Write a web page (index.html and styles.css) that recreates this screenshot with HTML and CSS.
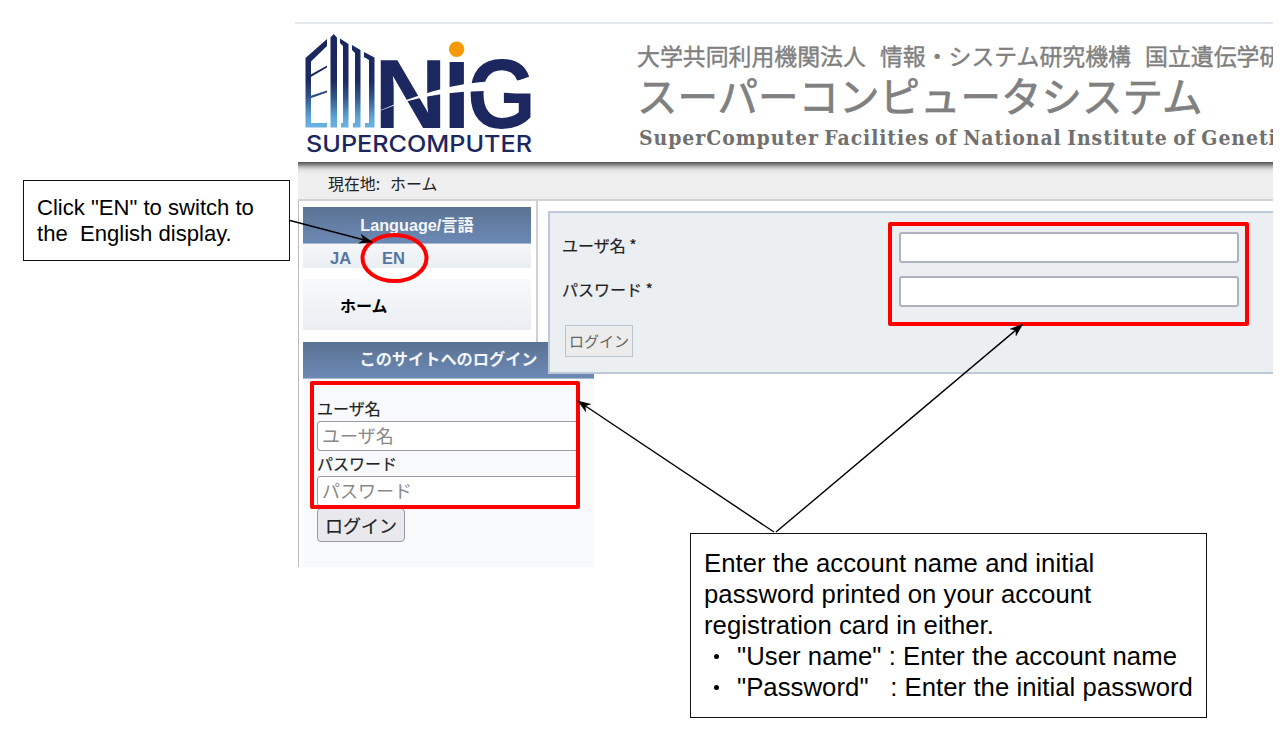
FILE: index.html
```
<!DOCTYPE html>
<html lang="ja">
<head>
<meta charset="utf-8">
<title>NIG SuperComputer</title>
<link rel="stylesheet" href="styles.css">
</head>
<body>
<main class="canvas">
  <div class="site">
    <header class="banner">
      <svg class="logo" width="240" height="126" viewBox="300 30 240 126">
        <defs>
          <linearGradient id="tower" gradientUnits="userSpaceOnUse" x1="0" y1="34" x2="0" y2="127">
            <stop offset="0" stop-color="#1b2760"/>
            <stop offset=".5" stop-color="#1b2a60"/>
            <stop offset=".68" stop-color="#31568a"/>
            <stop offset=".9" stop-color="#5fa5d8"/>
            <stop offset="1" stop-color="#6bb2e3"/>
          </linearGradient>
        </defs>
        <g fill="url(#tower)">
          <path d="M305.500 58 L327 39 V46 L311 61.500 V123 H327 V127.500 H305.500Z"/>
          <path d="M330.500 37.500 L333.700 34 L337 37.500 V127.500 H330.500Z"/>
          <path d="M340 38.500 L348.500 44 V127.500 H341 V123 H343 V46 L340 43Z"/>
          <path d="M352 45 L360.500 50 V127.500 H353 V123 H355 V53 L352 50Z"/>
          <path d="M364 52 L374.500 57.500 V127.500 H365 V123 H369 V60 L364 57Z"/>
          <path d="M310 75 L327 65.500 V67.500 L310 77.500Z M310 96 L327 90.500 V92.500 L310 98.500Z"/>
        </g>
        <g class="logo-name">
          <text x="374" y="127.500" textLength="73" lengthAdjust="spacingAndGlyphs">N</text>
          <text x="443" y="127.500">I</text>
          <text x="467" y="127.500" textLength="69" lengthAdjust="spacingAndGlyphs">G</text>
        </g>
        <path d="M447 56 H468 V62 H447Z" fill="#fff"/>
        <circle cx="456.600" cy="49.300" r="7.700" fill="#f59a05"/>
        <path d="M381 110 Q418 94 452 86.500 T533 81 V93.500 H516 L484 91 Q445 91 408 101 Q394 105 381 110.500Z" fill="#fff"/>
        <text class="logo-sub" x="306" y="152" textLength="226" lengthAdjust="spacingAndGlyphs">SUPERCOMPUTER</text>
      </svg>
      <div class="titles">
        <div class="org"><span>大学共同利用機関法人</span><span>情報・システム研究機構</span><span>国立遺伝学研究所</span></div>
        <h1 class="system">スーパーコンピュータシステム</h1>
        <div class="facility">SuperComputer Facilities of National Institute of Genetics</div>
      </div>
    </header>
    <nav class="crumbs"><span>現在地:</span><span>ホーム</span></nav>
    <div class="columns">
      <aside class="side">
        <div class="rail">
          <section class="lang">
            <h2 class="bar">Language/言語</h2>
            <div class="langs"><a>JA</a><a>EN</a></div>
          </section>
          <div class="home">ホーム</div>
        </div>
        <section class="signin">
          <h2 class="bar">このサイトへのログイン</h2>
          <div class="fields">
            <label>ユーザ名</label>
            <div class="field">ユーザ名</div>
            <label>パスワード</label>
            <div class="field">パスワード</div>
            <div class="send">ログイン</div>
          </div>
        </section>
      </aside>
      <section class="panel">
        <div class="row"><label>ユーザ名 *</label><div class="entry"></div></div>
        <div class="row"><label>パスワード *</label><div class="entry"></div></div>
        <div class="go">ログイン</div>
      </section>
    </div>
  </div>

  <svg class="marks" width="1282" height="729" viewBox="0 0 1282 729">
    <defs>
      <marker id="tip" viewBox="0 0 14 10" refX="13" refY="5" markerWidth="14" markerHeight="10" markerUnits="userSpaceOnUse" orient="auto">
        <path d="M14 5 L0 0 L4 5 L0 10Z"/>
      </marker>
    </defs>
    <g fill="none" stroke="#f00" stroke-width="4" stroke-linejoin="round">
      <ellipse cx="394.500" cy="258" rx="32" ry="23"/>
      <rect x="312" y="383" width="266" height="124"/>
      <rect x="890" y="224" width="357" height="100"/>
    </g>
    <g stroke="#000" stroke-width="1.400">
      <path d="M290 220.500 L372 242" marker-end="url(#tip)"/>
      <path d="M774 532 L578 401" marker-end="url(#tip)"/>
      <path d="M776 532 L1022.500 324.500" marker-end="url(#tip)"/>
    </g>
  </svg>

  <div class="note note-lang">Click "EN" to switch to<br>the&nbsp; English display.</div>
  <div class="note note-account">
    <p>Enter the account name and initial<br>password printed on your account<br>registration card in either.</p>
    <p class="item"><i></i><span>"User name" : Enter the account name</span></p>
    <p class="item"><i></i><span>"Password" &nbsp; : Enter the initial password</span></p>
  </div>
</main>
</body>
</html>
```
FILE: styles.css
```
* { box-sizing: border-box; }
body { margin: 0; background: #fff; }
h1, h2, p { margin: 0; font-weight: normal; }
.canvas {
  position: relative;
  width: 1282px;
  height: 729px;
  padding: 22px 0 0 295px;
  overflow: hidden;
  font-family: "Liberation Sans", "Noto Sans CJK JP", sans-serif;
}
.site { width: 978px; height: 545px; overflow: hidden; font-size: 16px; color: #222; }
.banner {
  display: flex;
  height: 140px;
  padding: 6px 0 0 5px;
  border-top: 2px solid #e3e8ee;
}
.logo { flex: none; }
.logo-name { font: bold 99px "Liberation Sans", sans-serif; fill: #1c2760; }
.logo-sub { font: 500 22.500px Inter, sans-serif; fill: #1c2760; }
.titles { flex: none; margin-left: 97px; white-space: nowrap; color: #808080; }
.org { display: flex; gap: 14px; margin-top: 8px; height: 34px; font: 22.900px/34px "Noto Sans CJK JP", sans-serif; -webkit-text-stroke: .4px #808080; }
.system { height: 46px; font: 40.500px/46px "Noto Sans CJK JP", sans-serif; -webkit-text-stroke: .7px #808080; }
.facility {
  margin: 7px 0 0 2px;
  font: bold 21px/26px "DejaVu Serif Condensed", "DejaVu Serif", serif;
  letter-spacing: .920px;
  word-spacing: -2px;
  color: #707070;
}
.crumbs {
  display: flex;
  gap: 10px;
  height: 39px;
  margin-left: 3px;
  padding: 7px 0 0 30px;
  border-bottom: 2px solid #d2d2d2;
  background: linear-gradient(#555 0, #777 2px, #bbb 5px, #e2e2e2 8px, #efefef 12px);
  font: 15.900px/30px "Noto Sans CJK JP", sans-serif;
}
.columns { display: flex; margin-left: 3px; height: 367px; border-left: 1px solid #bbb; }
.side { flex: none; width: 249px; }
.rail { width: 239px; height: 141px; padding: 6px 5px 0 4px; border-right: 2px solid #d0d0d0; }
.bar {
  height: 37px;
  background: linear-gradient(#5b7393, #6c89b5);
  border-bottom: 1px solid #a9b9cf;
  color: #f3f6fa;
  font: bold 16.200px/36px "Liberation Sans", "Noto Sans CJK JP", sans-serif;
  text-align: center;
}
.langs {
  display: flex;
  gap: 31px;
  height: 24px;
  padding-left: 27px;
  background: linear-gradient(#f6f7f9, #eaeef2);
  color: #5775a3;
  font: bold 16.500px/28px "Liberation Sans", sans-serif;
}
.home {
  height: 51px;
  margin-top: 11px;
  padding-left: 37px;
  background: linear-gradient(#f8f9fb, #eaeef2);
  color: #000;
  font: bold 16px/53px "Noto Sans CJK JP", sans-serif;
}
.signin { width: 291px; height: 226px; margin-left: 4px; background: #f7f9fb; }
.signin .bar { line-height: 35px; }
.fields { padding: 17px 0 0 14px; font: 16px/25px "Noto Sans CJK JP", sans-serif; -webkit-text-stroke: .2px #222; }
.fields label { display: block; height: 25px; line-height: 24px; }
.field {
  width: 263px;
  height: 30px;
  padding-left: 4px;
  border: 1px solid #999aa5;
  border-radius: 3px;
  background: #fff;
  color: #888;
  font: 18px/27px "Noto Sans CJK JP", sans-serif;
  -webkit-text-stroke: 0;
}
.send {
  width: 88px;
  height: 34px;
  margin-top: 2px;
  border: 1px solid #999aa5;
  border-radius: 4px;
  background: #e9e9ed;
  font-size: 18px;
  line-height: 32px;
  text-align: center;
}
.panel {
  position: relative;
  flex: none;
  width: 740px;
  height: 163px;
  margin-top: 10px;
  padding: 21px 0 0 12px;
  border: 2px solid #bdc9d6;
  background: #ebeff2;
  font: 16px/22px "Noto Sans CJK JP", sans-serif;
}
.row { display: flex; height: 44px; }
.row label { width: 337px; -webkit-text-stroke: .2px #222; }
.entry { width: 340px; height: 31px; margin-top: -2px; border: 2px solid #b0b1bf; border-radius: 3px; background: #fff; }
.go {
  width: 68px;
  height: 32px;
  margin: 3px 0 0 3px;
  border: 1px solid #b7c4d3;
  background: #ececec;
  color: #666;
  font-size: 15px;
  line-height: 30px;
  text-align: center;
}
.marks { position: absolute; left: 0; top: 0; }
.note { position: absolute; background: #fff; border: 1.500px solid #111; color: #000; white-space: nowrap; }
.note-lang { left: 23px; top: 180px; width: 267px; height: 81px; padding: 14px 13px; font-size: 22.080px; line-height: 26px; }
.note-account { left: 690px; top: 533px; width: 517px; height: 185px; padding: 14px 13px; font-size: 25.690px; line-height: 31px; letter-spacing: .055px; }
.item { display: flex; gap: 7px; }
.item i { width: 5px; height: 5px; margin: 13px 11px 0 10px; border-radius: 50%; background: #000; }
```
